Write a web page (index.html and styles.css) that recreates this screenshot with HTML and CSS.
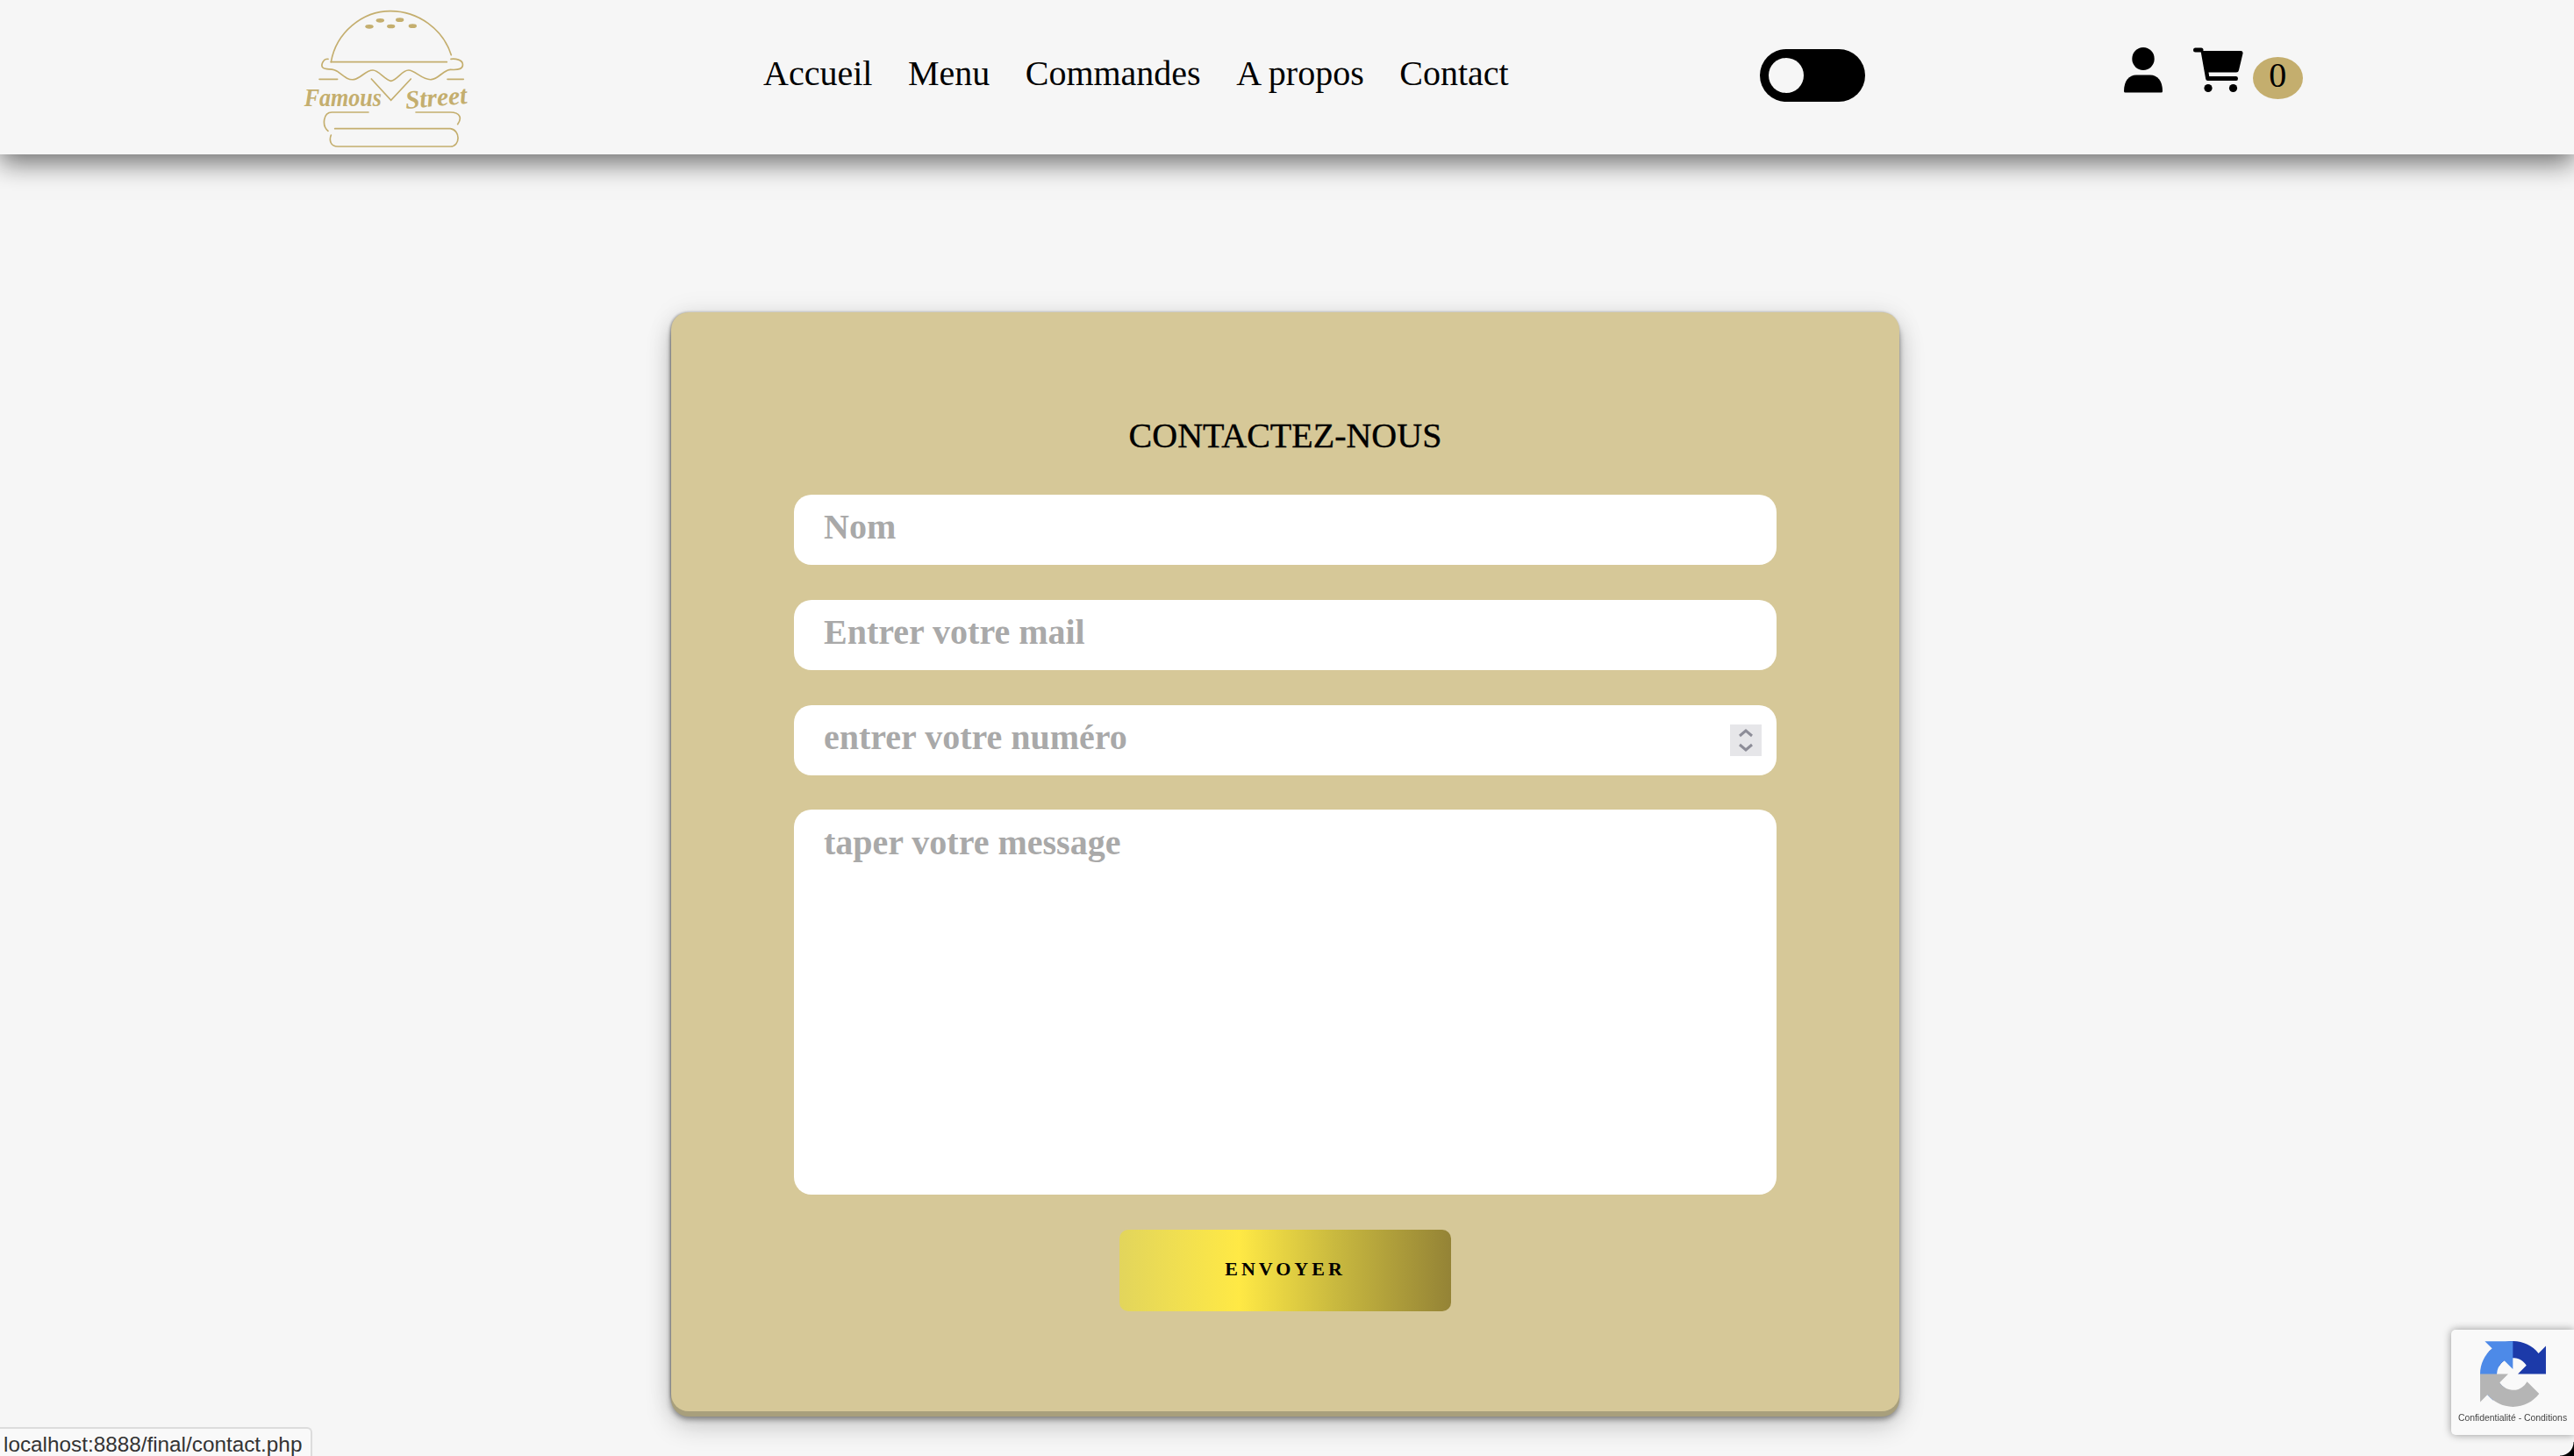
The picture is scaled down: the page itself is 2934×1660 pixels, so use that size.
FILE: index.html

```html
<!doctype html>
<html>
<head>
<meta charset="utf-8">
<title>Contact</title>
<link rel="stylesheet" href="styles.css">
</head>

<body>
	<header class="top">
		<a href="#" class="logo">
			<svg viewBox="0 0 900 528" width="300" height="176">
				<g fill="none" stroke="#c4ae6e" stroke-width="5" stroke-linecap="round">
					<path d="M232 212C250 110 340 38 435 38C530 38 615 100 643 188"/>
					<path d="M232 212L628 212"/>
					<path d="M222 202C205 200 195 225 205 232C215 240 240 232 255 245C275 260 290 275 310 272C335 268 350 240 375 240C395 240 415 272 437 277C460 272 475 240 497 240C520 240 545 275 575 272C600 270 615 240 640 238C670 240 685 235 682 218C680 205 660 200 642 202"/>
					<path d="M192 271L254 271M630 271L685 271"/>
					<path d="M370 270L437 343L505 270"/>
					<path d="M360 384L235 384C205 384 200 430 222 448M522 384L640 384C675 384 680 405 665 425"/>
					<path d="M245 440L640 440C675 445 675 500 640 501L255 501C230 501 225 480 232 462"/>
				</g>
				<g fill="#c4ae6e">
					<ellipse cx="363" cy="91" rx="14" ry="7"/>
					<ellipse cx="400" cy="70" rx="14" ry="7"/>
					<ellipse cx="437" cy="90" rx="14" ry="7"/>
					<ellipse cx="467" cy="68" rx="14" ry="7"/>
					<ellipse cx="511" cy="89" rx="14" ry="7"/>
					<text x="140" y="364" class="logo-word" textLength="265" lengthAdjust="spacingAndGlyphs">Famous</text>
					<text x="488" y="372" class="logo-word" textLength="212" lengthAdjust="spacingAndGlyphs" transform="rotate(-5 488 372)">Street</text>
				</g>
			</svg>
		</a>
		<nav class="menu">
			<a href="#">Accueil</a>
			<a href="#">Menu</a>
			<a href="#">Commandes</a>
			<a href="#">A propos</a>
			<a href="#">Contact</a>
		</nav>
		<div class="switch"><span class="knob"></span></div>
		<div class="tools">
			<svg class="ico-user" viewBox="0 0 44 52">
				<ellipse cx="22" cy="13" rx="12.7" ry="13"/>
				<path d="M14 31.5H30C38 31.5 44 38 44 50Q44 51.5 42.5 51.5H1.5Q0 51.5 0 50C0 38 6 31.5 14 31.5Z"/>
			</svg>
			<svg class="ico-cart" viewBox="0 0 57 52">
				<rect x="0" y="0.5" width="11.5" height="5" rx="2.5"/>
				<path d="M8.5 4H54Q57 4 56.5 7L52 26Q51.5 28.5 49 28.5H17.5L18.2 33H49Q51 33 51 35.5Q51 38 49 38H16.5Q14.5 38 14.2 36Z"/>
				<circle cx="17" cy="46.5" r="4.6"/>
				<circle cx="45.5" cy="46.5" r="4.6"/>
			</svg>
			<span class="badge">0</span>
		</div>
	</header>

	<main class="page">
		<form class="card">
			<h2 class="card-title">CONTACTEZ-NOUS</h2>
			<input class="field" type="text" placeholder="Nom">
			<input class="field" type="text" placeholder="Entrer votre mail">
			<div class="num-wrap">
				<input class="field" type="text" placeholder="entrer votre numéro">
				<span class="spin">
					<svg viewBox="0 0 36 36" width="36" height="36"><path d="M11 13L18 7L25 13M11 23L18 29L25 23" fill="none" stroke="#8d8d98" stroke-width="3"/></svg>
				</span>
			</div>
			<textarea class="field field-big" placeholder="taper votre message"></textarea>
			<button class="send" type="button">ENVOYER</button>
		</form>
	</main>

	<div class="status">localhost:8888/final/contact.php</div>

	<div class="captcha">
		<svg viewBox="0 0 64 64" width="75" height="75">
			<path d="M64 31.955l-.033-1.37V4.687l-7.16 7.16C50.948 4.674 42.033.093 32.05.093c-10.4 0-19.622 4.96-25.458 12.64l11.736 11.86a15.55 15.55 0 0 1 4.754-5.334c2.05-1.6 4.952-2.906 8.968-2.906.485 0 .86.057 1.135.163 4.976.393 9.288 3.14 11.828 7.124l-8.307 8.307 26.293.001" fill="#1c3aa9"/>
			<path d="M31.862.094l-1.37.033H4.594l7.16 7.16C4.58 13.147 0 22.06 0 32.046c0 10.4 4.96 19.622 12.64 25.458L24.5 45.768a15.55 15.55 0 0 1-5.334-4.754c-1.6-2.05-2.906-4.952-2.906-8.968 0-.485.057-.86.163-1.135.393-4.976 3.14-9.288 7.124-11.828l8.307 8.307L31.862.094" fill="#4d8ae8"/>
			<path d="M.001 32.045l.033 1.37V59.31l7.16-7.16c5.86 7.173 14.774 11.754 24.76 11.754 10.4 0 19.622-4.96 25.458-12.64l-11.736-11.86a15.55 15.55 0 0 1-4.754 5.334c-2.05 1.6-4.952 2.906-8.968 2.906-.485 0-.86-.057-1.135-.163-4.976-.393-9.288-3.14-11.828-7.124l8.307-8.307-26.293-.001" fill="#b5b5b5"/>
		</svg>
		<p class="captcha-txt">Confidentialité - Conditions</p>
	</div>

	<span class="corner corner-r"></span>
</body>
</html>
```

FILE: styles.css

```css
*{margin:0; padding:0; box-sizing:border-box;}
html,body{height:100%; overflow:hidden;}
body{background:#f6f6f6; font-family:"Liberation Serif",serif; color:#000;}
a{color:#000; text-decoration:none;}

.top{height:176px; background:#f6f6f6; display:flex; align-items:center; padding-left:300px; box-shadow:0 10px 28px rgba(0,0,0,0.55);}
.logo{display:block; width:300px; height:176px; flex:none;}
.logo-word{font-family:"Liberation Serif",serif; font-style:italic; font-weight:bold; font-size:88px;}

.menu{display:flex; gap:40.5px; margin-left:270px; margin-bottom:10px; font-size:40px;}
.switch{width:120px; height:60px; margin-left:286px; margin-bottom:4px; background:#000; border-radius:30px; padding:10px; flex:none;}
.knob{display:block; width:40px; height:40px; background:#f6f6f6; border-radius:50%;}

.tools{display:flex; align-items:flex-start; margin-left:295px; margin-bottom:4px; height:64px;}
.ico-user{width:44px; height:52px;}
.ico-cart{width:57px; height:52px; margin-left:35px;}
.badge{width:57px; height:48px; margin-top:11px; margin-left:11px; background:#c4ae6e; border-radius:50%; font-size:40px; line-height:42px; text-align:center;}

.page{display:flex; justify-content:center; padding-top:180px; padding-right:4px;}
.card{width:1400px; height:1253px; background:#d6c898; border-radius:20px; padding:118px 140px 0; display:flex; flex-direction:column; align-items:center; box-shadow:0 6px 0 #a89f7c,0 9px 6px rgba(0,0,0,0.4),0 16px 30px rgba(0,0,0,0.2),0 0 30px rgba(0,0,0,0.08),-1px 0 3px rgba(0,0,0,0.35);}
.card-title{font-size:40px; font-weight:normal; line-height:46px; height:90px; -webkit-text-stroke:0.4px #000;}

.field{display:block; width:1120px; height:80px; border:0; outline:0; border-radius:20px; background:#fff; padding:0 34px 7px; margin-bottom:40px; font-family:"Liberation Serif",serif; font-weight:bold; font-size:40px; color:#000;}
.field::placeholder{color:#a9a9a9; opacity:1;}
.field-big{height:439px; padding-top:14px; resize:none;}
.num-wrap{position:relative; width:1120px;}
.num-wrap .field{margin-bottom:39px;}
.spin{position:absolute; right:17px; top:22px; width:36px; height:36px; background:#e6e6e9;}
.spin svg{display:block;}

.send{width:378px; height:93px; border:0; border-radius:10px; padding-bottom:4px; background:linear-gradient(90deg,#e2d55c 0%,#ffe945 36%,#c9b93f 65%,#948336 100%); font-family:"Liberation Serif",serif; font-weight:bold; font-size:22px; letter-spacing:4px; color:#000;}

.status{position:fixed; left:0; bottom:0; width:356px; height:33px; background:#f9f9f9; border:2px solid #dcdcdc; border-left:0; border-bottom:0; border-top-right-radius:6px; font-family:"Liberation Sans",sans-serif; font-size:24.3px; line-height:36px; padding-left:4px; color:#333; white-space:nowrap;}

.captcha{position:fixed; right:0; bottom:24px; width:140px; height:120px; background:#f9f9f9; border-radius:5px 0 0 5px; box-shadow:0 0 10px rgba(0,0,0,0.4); display:flex; flex-direction:column; align-items:center; padding-top:13px;}
.captcha-txt{font-family:"Liberation Sans",sans-serif; font-size:10.4px; color:#444; margin-top:7px; white-space:nowrap;}

.corner{position:fixed; width:16px; height:16px;}
.corner-r{right:0; bottom:0; background:radial-gradient(circle at 0 0,transparent 15px,#000 16px);}
```
